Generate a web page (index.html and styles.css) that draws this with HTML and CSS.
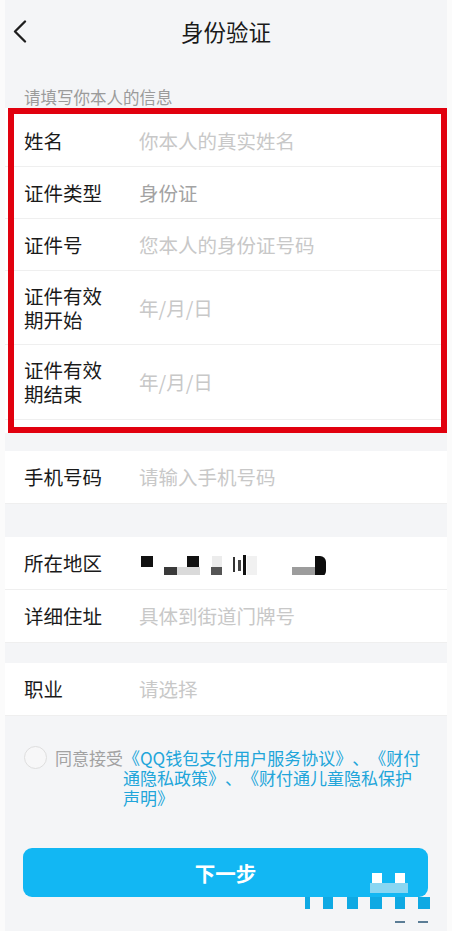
FILE: index.html
```html
<!DOCTYPE html>
<html lang="zh-CN">
<head>
<meta charset="utf-8">
<title>身份验证</title>
<link rel="stylesheet" href="styles.css">
</head>
<body>
<div class="page">
  <header class="topbar">
    <button class="back" aria-label="返回">
      <svg width="14" height="23" viewBox="0 0 14 23"><path d="M12 1.5 L2 11.5 L12 21.5" fill="none" stroke="#1e1e1e" stroke-width="2.3" stroke-linecap="round" stroke-linejoin="round"/></svg>
    </button>
    <h1 class="title">身份验证</h1>
    <span class="spacer"></span>
  </header>

  <p class="hint">请填写你本人的信息</p>

  <section class="group marked">
    <div class="row"><span class="label">姓名</span><span class="value ph">你本人的真实姓名</span></div>
    <div class="row"><span class="label">证件类型</span><span class="value filled">身份证</span></div>
    <div class="row"><span class="label">证件号</span><span class="value ph">您本人的身份证号码</span></div>
    <div class="row tall"><span class="label wrap">证件有效期开始</span><span class="value ph">年/月/日</span></div>
    <div class="row tall last"><span class="label wrap">证件有效期结束</span><span class="value ph">年/月/日</span></div>
  </section>

  <section class="group g-phone">
    <div class="row"><span class="label">手机号码</span><span class="value ph">请输入手机号码</span></div>
  </section>

  <section class="group g-addr">
    <div class="row">
      <span class="label">所在地区</span>
      <span class="value">
        <svg class="mosaic" width="190" height="24" viewBox="0 0 190 24">
          <rect x="2" y="5" width="12" height="11" fill="#111"/>
          <rect x="38" y="16" width="23" height="11" fill="#dadada"/>
          <rect x="25" y="16" width="13" height="11" fill="#3a3a3a"/>
          <rect x="48" y="5" width="12" height="11" fill="#111"/>
          <rect x="73" y="5" width="10" height="11" fill="#ececec"/>
          <rect x="72" y="16" width="11" height="10" fill="#555"/>
          <rect x="94" y="6" width="2" height="15" fill="#333"/>
          <rect x="99" y="9" width="3" height="11" fill="#444"/>
          <rect x="104" y="4" width="3" height="20" fill="#111"/>
          <rect x="108" y="5" width="10" height="20" fill="#f1f1f1"/>
          <rect x="153" y="16" width="23" height="11" fill="#9c9c9c"/>
          <path d="M176 5 h5 a6 6 0 0 1 6 6 v9 a6 6 0 0 1 -6 6 h-5 z" fill="#0d0d0d"/>
        </svg>
      </span>
    </div>
    <div class="row"><span class="label">详细住址</span><span class="value ph">具体到街道门牌号</span></div>
  </section>

  <section class="group g-job">
    <div class="row"><span class="label">职业</span><span class="value ph">请选择</span></div>
  </section>

  <div class="agree">
    <span class="radio"></span>
    <span class="agree-text">同意接受</span>
    <span class="links">《QQ钱包支付用户服务协议》、《财付通隐私政策》、《财付通儿童隐私保护声明》</span>
  </div>

  <button class="next">下一步</button>

  <svg class="watermark" width="140" height="60" viewBox="0 0 140 60">
    <rect x="70" y="15" width="38" height="10" fill="#8ad6f2"/>
    <rect x="72" y="5" width="10" height="10" fill="#ffffff"/>
    <rect x="95" y="5" width="10" height="10" fill="#ffffff"/>
    <rect x="5" y="29" width="5" height="12" fill="#0fa9e3"/>
    <rect x="23" y="29" width="10" height="12" fill="#0fa9e3"/>
    <rect x="47" y="29" width="11" height="12" fill="#0fa9e3"/>
    <rect x="70" y="29" width="12" height="12" fill="#0fa9e3"/>
    <rect x="95" y="29" width="10" height="12" fill="#0fa9e3"/>
    <rect x="118" y="29" width="12" height="12" fill="#0fa9e3"/>
    <rect x="95" y="53" width="10" height="2" fill="#5b7d96"/>
    <rect x="118" y="53" width="10" height="2" fill="#5b7d96"/>
  </svg>
</div>
</body>
</html>
```

FILE: styles.css
```css
* { box-sizing: border-box; }

html, body {
  margin: 0;
  padding: 0;
  background: #fbfbfb;
}

.page {
  position: relative;
  margin: 0 5px;
  min-height: 931px;
  background: #f4f5f7;
  font-family: "Noto Sans CJK SC", "Noto Sans", sans-serif;
  color: #1e1e1e;
  overflow: hidden;
  text-spacing-trim: space-all;
}

.topbar {
  display: grid;
  grid-template-columns: 40px 1fr 40px;
  align-items: center;
  height: 62px;
}

.back {
  display: flex;
  align-items: center;
  padding: 0 0 0 8px;
  margin: 0;
  border: 0;
  background: none;
  height: 40px;
}

.title {
  margin: 0;
  text-align: center;
  font-size: 22.5px;
  font-weight: 400;
  line-height: 30px;
  color: #1a1a1a;
}

.hint {
  margin: 24px 0 0;
  padding-left: 19px;
  font-size: 16.5px;
  line-height: 22px;
  color: #9b9b9b;
}

.group {
  background: #ffffff;
}

.marked {
  position: relative;
  padding: 7px 0 13px;
}

.marked::after {
  content: "";
  position: absolute;
  top: 0;
  bottom: 0;
  left: 3px;
  right: 0;
  border: 6px solid #e1000e;
  pointer-events: none;
}

.row {
  display: flex;
  align-items: center;
  height: 53px;
  padding-left: 19px;
  border-bottom: 1px solid #efefef;
}

.marked .row { height: 52px; }
.marked .row.tall { height: 74px; }
.marked .row.last { height: 75px; }

.label {
  flex: none;
  width: 115px;
  font-size: 19.5px;
  line-height: 24px;
  color: #1a1a1a;
}

.label.wrap {
  padding-right: 34px;
}

.value {
  display: flex;
  align-items: center;
  font-size: 19.5px;
  line-height: 24px;
}

.value.ph {
  color: #c8c8c8;
}

.value.filled {
  color: #a3a3a3;
}

.g-phone {
  margin-top: 18px;
}

.g-addr {
  margin-top: 33px;
}

.g-job {
  margin-top: 20px;
}

.agree {
  display: flex;
  align-items: flex-start;
  margin-top: 32px;
  padding: 0 24px 0 19px;
  font-size: 17px;
  line-height: 20px;
}

.radio {
  flex: none;
  width: 23px;
  height: 23px;
  margin-top: -2px;
  border: 1.5px solid #dedede;
  border-radius: 50%;
  background: #f7f7f8;
}

.agree-text {
  flex: none;
  margin-left: 8px;
  color: #a2a2a2;
}

.links {
  flex: 1;
  color: #21a5da;
  text-spacing-trim: space-all;
}

.next {
  display: block;
  width: calc(100% - 37px);
  height: 49px;
  margin: 40px 19px 0 18px;
  border: 0;
  border-radius: 9px;
  background: #12b7f3;
  color: #ffffff;
  font-family: "Noto Sans CJK SC", "Noto Sans", sans-serif;
  font-size: 20.5px;
  font-weight: 700;
}

.watermark {
  position: absolute;
  left: 295px;
  top: 868px;
}
```
